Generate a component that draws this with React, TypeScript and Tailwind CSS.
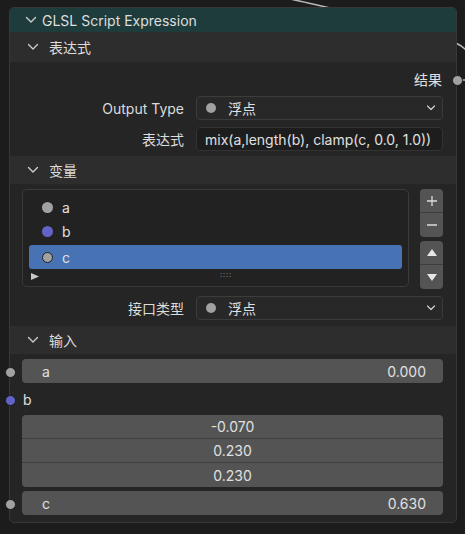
import React from 'react'

const font = { fontFamily: 'Inter, "Noto Sans CJK SC", sans-serif' }

function Chevron({ className = '' }: { className?: string }) {
  return (
    <svg width="12" height="8" viewBox="0 0 12 8" className={className}>
      <path d="M1.5 1.5 L6 6 L10.5 1.5" fill="none" stroke="#d0d0d0" strokeWidth="1.3" strokeLinecap="round" strokeLinejoin="round" />
    </svg>
  )
}

function SmallChevron() {
  return (
    <svg width="10" height="6" viewBox="0 0 10 6">
      <path d="M1.5 1 L5 4.5 L8.5 1" fill="none" stroke="#cfcfcf" strokeWidth="1.2" strokeLinecap="round" strokeLinejoin="round" />
    </svg>
  )
}

function PanelHeader({ title, className = '' }: { title: string; className?: string }) {
  return (
    <div className={`flex items-center bg-[#2d2d2d] pl-[17px] text-[14px] text-[#dcdcdc] ${className}`}>
      <Chevron />
      <span className="ml-[10px]">{title}</span>
    </div>
  )
}

function Dropdown({ label }: { label: string }) {
  return (
    <div className="flex h-[24px] w-[247px] items-center rounded-[4px] border border-[#3c3c3c] bg-[#282828] pl-[9px] pr-[6px]">
      <span className="h-[10px] w-[10px] rounded-full bg-[#a1a1a1]" />
      <span className="ml-[12px] flex-1 text-[14px] text-[#e0e0e0]">{label}</span>
      <SmallChevron />
    </div>
  )
}

function Socket({ color, top, left }: { color: string; top: number; left: number }) {
  return (
    <span
      className={`absolute h-[11px] w-[11px] rounded-full border border-[#1a1a1a] ${color}`}
      style={{ top: top - 5.5, left: left - 5.5 }}
    />
  )
}

export default function App() {
  const items = [
    { name: 'a', dot: 'bg-[#a1a1a1]', sel: false },
    { name: 'b', dot: 'bg-[#6363c7]', sel: false },
    { name: 'c', dot: 'bg-[#a1a1a1] border border-[#1e1e1e]', sel: true },
  ]

  return (
    <div className="relative h-[534px] w-[465px] overflow-hidden bg-[#1c1c1c]" style={font}>
      {/* wires */}
      <svg className="absolute left-0 top-0" width="465" height="534">
        <path d="M290 -1 C300 1, 312 4, 330 8" fill="none" stroke="#b8b8b8" strokeWidth="1.5" />
        <path d="M456 43 C460 45, 463 47, 466 50" fill="none" stroke="#b8b8b8" strokeWidth="1.5" />
        <path d="M461 80 L466 80" fill="none" stroke="#b8b8b8" strokeWidth="1.5" />
      </svg>

      <div className="relative ml-[9px] mt-[7px] w-[448px] overflow-hidden rounded-[5px] border border-[#383838] bg-[#252525] pb-[7px]">
        {/* header */}
        <div className="flex h-[24px] items-center bg-[#1f3c3c] pl-[15px] text-[14px] text-[#dedede]">
          <Chevron />
          <span className="ml-[5px]">GLSL Script Expression</span>
        </div>

        <PanelHeader title="表达式" className="h-[30px]" />

        <div className="flex h-[24px] items-center justify-end pr-[14px] mt-[5px] text-[14px] text-[#e0e0e0]">结果</div>

        <div className="mt-[5px] flex h-[24px] items-center pr-[13px]">
          <span className="flex-1 pr-[12px] text-right text-[14px] text-[#dcdcdc]">Output Type</span>
          <Dropdown label="浮点" />
        </div>

        <div className="mt-[7px] flex h-[24px] items-center pr-[13px]">
          <span className="flex-1 pr-[12px] text-right text-[14px] text-[#dcdcdc]">表达式</span>
          <div className="flex h-[24px] w-[247px] items-center rounded-[4px] border border-[#333] bg-[#1d1d1d] pl-[8px] text-[14px] text-[#e0e0e0]">
            mix(a,length(b), clamp(c, 0.0, 1.0))
          </div>
        </div>

        <PanelHeader title="变量" className="mt-[5px] h-[28px]" />

        <div className="mt-[5px] flex pl-[12px] pr-[13px]">
          <div className="flex h-[98px] w-[387px] flex-col rounded-[5px] border border-[#3a3a3a] bg-[#222222] px-[6px] pt-[5px]">
            {items.map(it => (
              <div
                key={it.name}
                className={`flex h-[24px] items-center rounded-[3px] pl-[13px] text-[14px] text-[#e0e0e0] ${it.sel ? 'mt-[2px] bg-[#4772b3]' : ''}`}
              >
                <span className={`h-[11px] w-[11px] rounded-full ${it.dot}`} />
                <span className="ml-[9px]">{it.name}</span>
              </div>
            ))}
            <div className="relative flex h-[14px] items-center pl-[1px]">
              <svg width="10" height="9" viewBox="0 0 10 9">
                <path d="M1 1 L9 4.5 L1 8 Z" fill="#c8c8c8" />
              </svg>
              <span className="absolute left-[191px] top-[2px] text-[7px] leading-none tracking-[1px] text-[#9a9a9a]">::::</span>
            </div>
          </div>
          <div className="ml-[11px] flex flex-col">
            <div className="flex w-[23px] flex-col overflow-hidden rounded-[4px] bg-[#545454]">
              <div className="flex h-[24px] items-center justify-center border-b border-[#3d3d3d]">
                <svg width="12" height="12" viewBox="0 0 12 12">
                  <path d="M6 1 V11 M1 6 H11" stroke="#dcdcdc" strokeWidth="1.3" />
                </svg>
              </div>
              <div className="flex h-[24px] items-center justify-center">
                <svg width="12" height="12" viewBox="0 0 12 12">
                  <path d="M1 6 H11" stroke="#dcdcdc" strokeWidth="1.3" />
                </svg>
              </div>
            </div>
            <div className="mt-[4px] flex w-[23px] flex-col overflow-hidden rounded-[4px] bg-[#545454]">
              <div className="flex h-[24px] items-center justify-center border-b border-[#3d3d3d]">
                <svg width="12" height="10" viewBox="0 0 12 10">
                  <path d="M6 1 L11 8 L1 8 Z" fill="#e6e6e6" />
                </svg>
              </div>
              <div className="flex h-[24px] items-center justify-center">
                <svg width="12" height="10" viewBox="0 0 12 10">
                  <path d="M1 2 L11 2 L6 9 Z" fill="#e6e6e6" />
                </svg>
              </div>
            </div>
          </div>
        </div>

        <div className="mt-[7px] flex h-[24px] items-center pr-[13px]">
          <span className="flex-1 pr-[12px] text-right text-[14px] text-[#dcdcdc]">接口类型</span>
          <Dropdown label="浮点" />
        </div>

        <PanelHeader title="输入" className="mt-[6px] h-[28px]" />

        <div className="mt-[5px] flex flex-col gap-[4px] pl-[12px] pr-[13px] text-[14px] text-[#e0e0e0]">
          <div className="flex h-[24px] items-center justify-between rounded-[4px] bg-[#545454] pl-[20px] pr-[17px]">
            <span>a</span>
            <span>0.000</span>
          </div>
          <div className="flex h-[24px] items-center pl-[1px]">b</div>
          <div className="flex flex-col overflow-hidden rounded-[4px] bg-[#545454]">
            {['-0.070', '0.230', '0.230'].map((v, i) => (
              <div key={i} className={`flex h-[24px] items-center justify-center ${i < 2 ? 'border-b border-[#3f3f3f]' : ''}`}>
                {v}
              </div>
            ))}
          </div>
          <div className="flex h-[24px] items-center justify-between rounded-[4px] bg-[#545454] pl-[20px] pr-[17px]">
            <span>c</span>
            <span>0.630</span>
          </div>
        </div>
      </div>

      {/* sockets */}
      <Socket color="bg-[#a1a1a1]" top={80} left={457} />
      <Socket color="bg-[#a1a1a1]" top={372} left={10} />
      <Socket color="bg-[#6363c7]" top={400} left={10} />
      <Socket color="bg-[#a1a1a1]" top={504} left={10} />
    </div>
  )
}
